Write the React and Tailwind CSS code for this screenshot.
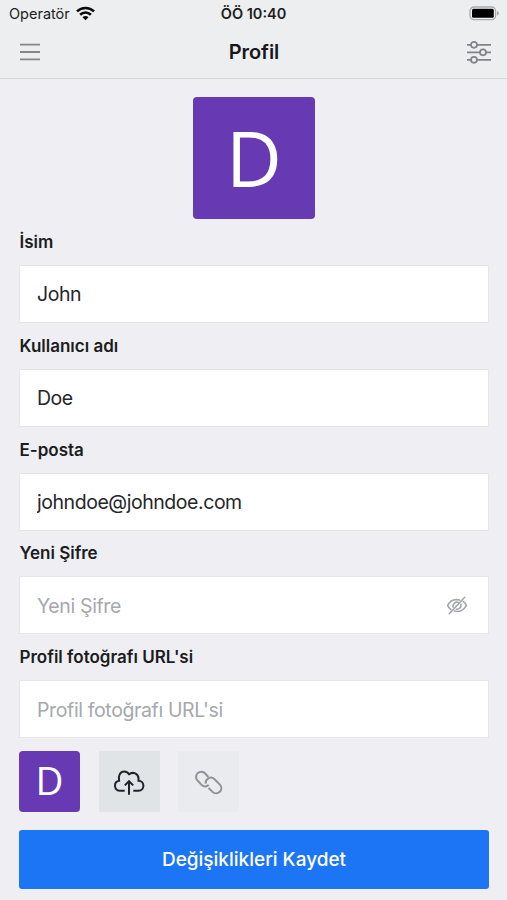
import React, { useState } from 'react';

const FIELDS = [
  { id: 'name', label: 'İsim' },
  { id: 'username', label: 'Kullanıcı adı' },
  { id: 'email', label: 'E-posta' },
  { id: 'password', label: 'Yeni Şifre', placeholder: 'Yeni Şifre', secret: true },
  { id: 'photo', label: "Profil fotoğrafı URL'si", placeholder: "Profil fotoğrafı URL'si" },
];

function WifiIcon() {
  return (
    <svg width="19" height="15" viewBox="0 0 19 15" fill="none" stroke="#0b0b0d" strokeWidth="2.6">
      <path d="M1 5.4a12.2 12.2 0 0 1 17 0" />
      <path d="M4.1 8.7a7.7 7.7 0 0 1 10.8 0" />
      <path d="M9.5 14.3 6.5 11.2a4.2 4.2 0 0 1 6 0z" fill="#0b0b0d" stroke="none" />
    </svg>
  );
}

function BatteryIcon() {
  return (
    <svg width="32" height="15" viewBox="0 0 32 15">
      <rect x="2" y="1" width="25.6" height="12.6" rx="4" fill="#f4f4f5" stroke="#a9aaac" strokeWidth="1.3" />
      <rect x="4" y="2.8" width="21.8" height="9" rx="1.5" fill="#000" />
      <path d="M29 5c2.600 1 2.600 3.600 0 4.600z" fill="#a9aaac" />
    </svg>
  );
}

function MenuIcon() {
  return (
    <svg width="20" height="18" viewBox="0 0 20 18" stroke="#85868b" strokeWidth="1.8">
      <path d="M0 1.6h20M0 9h20M0 16.4h20" />
    </svg>
  );
}

function SlidersIcon() {
  return (
    <svg width="24" height="24" viewBox="0 0 24 24" fill="none" stroke="#808388" strokeWidth="1.7">
      <path d="M0 4.8h4M10 4.8h14M0 12.3h13M19 12.3h5M0 19.8h4M10 19.8h14" />
      <circle cx="7" cy="4.8" r="3" />
      <circle cx="16" cy="12.3" r="3" />
      <circle cx="7" cy="19.8" r="3" />
    </svg>
  );
}

function EyeOffIcon() {
  return (
    <svg width="22" height="20" viewBox="0 0 22 20" fill="none" stroke="#a3a6ab" strokeWidth="1.6" strokeLinecap="round">
      <path d="M13.7 4.1C8.500 2.700 4 5 1.700 9.400c.7 1.800 1.800 3.200 3.200 4.300" />
      <path d="M17.2 5.5c1.400 1 2.500 2.300 3.200 3.900-2.300 4.700-7 6.900-12 5.600" />
      <path d="M12 6.3a4 4 0 0 0-4.900 4.700M10.300 13.200a4 4 0 0 0 4.600-4.800" />
      <path d="M18.7 1.3 3.300 17.700" />
    </svg>
  );
}

function CloudUploadIcon() {
  return (
    <svg width="34" height="30" viewBox="0 0 34 30" fill="none" stroke="#202428" strokeWidth="2">
      <path d="M12.7 22.7H7.600a5 5 0 0 1-.5-9.900C5.800 7.500 8.400 3.600 12.200 3.600c2.300 0 4.100 1.200 5.400 3.400" />
      <path d="M16.8 6.4c4.200-3.300 9.700-.7 9.700 4.200v2.100c2.900.1 4.900 2.300 4.900 5s-2.100 5-4.900 5H21.300" />
      <path d="M17 26.800V13.600M12.800 17.400l4.200-4.200 4.200 4.200" />
    </svg>
  );
}

function LinkIcon() {
  return (
    <svg width="31" height="28" viewBox="0 0 31 28" fill="none" stroke="#8f9296" strokeWidth="2">
      <path d="M15.3 8 12.200 4.500A5.200 5.200 0 0 0 4.400 11.400l3.900 4.300a5.200 5.200 0 0 0 7.400.3" />
      <path d="M12.7 14.600a5.200 5.200 0 0 1 8.600-4.600l5.600 5.600a5.200 5.200 0 0 1-7.400 7.300L15.600 19" />
    </svg>
  );
}

function Field({ field, value, onChange }) {
  return (
    <div className="mb-[12.8px]">
      <label htmlFor={field.id} className="block h-[33px] pl-[0.5px] text-[17px] leading-[21px] font-semibold text-[#1b1c20]">
        {field.label}
      </label>
      <div className="flex h-[58px] items-center border border-[#e6e6e9] bg-white pt-0.5 pr-5 pl-[17px]">
        <input
          id={field.id}
          type={field.secret ? 'password' : 'text'}
          value={value}
          placeholder={field.placeholder}
          onChange={(e) => onChange(field.id, e.target.value)}
          className="min-w-0 flex-1 bg-transparent text-[19.5px] tracking-[-0.45px] text-[#25262a] outline-none placeholder:tracking-[-0.37px] placeholder:text-[#a5a8ad]"
        />
        {field.secret && <EyeOffIcon />}
      </div>
    </div>
  );
}

export default function App() {
  const [form, setForm] = useState({
    name: 'John',
    username: 'Doe',
    email: 'johndoe@johndoe.com',
    password: '',
    photo: '',
  });

  const update = (id, value) => setForm((prev) => ({ ...prev, [id]: value }));

  return (
    <div className="flex h-[900px] w-[507px] flex-col overflow-hidden bg-[#efeef3] font-['Inter','Liberation_Sans',sans-serif]">
      <header className="h-[79px] shrink-0 border-b border-[#d9dadd] bg-[#edeef0]">
        {/* Status bar */}
        <div className="grid h-[27px] grid-cols-3 items-center px-[7px] text-[14.5px] text-[#1c1d20]">
          <div className="flex items-center gap-[6px] pl-0.5">
            <span>Operatör</span>
            <WifiIcon />
          </div>
          <span className="text-center font-semibold">ÖÖ 10:40</span>
          <div className="flex justify-end">
            <BatteryIcon />
          </div>
        </div>
        {/* Navigation */}
        <div className="grid h-[50px] grid-cols-3 items-center px-4">
          <button type="button" aria-label="Menü" className="pl-[3.5px]">
            <MenuIcon />
          </button>
          <h1 className="pl-px text-center text-xl font-semibold tracking-[-0.1px] text-[#17181b]">Profil</h1>
          <button type="button" aria-label="Ayarlar" className="flex justify-end">
            <SlidersIcon />
          </button>
        </div>
      </header>

      <main className="pt-[18px] pr-[18px] pl-[19px]">
        <div className="mx-auto mb-[13px] flex size-[122px] items-center justify-center rounded bg-[#673ab4] pb-0.5 font-['Open_Sans'] text-[77px] leading-none text-white">
          D
        </div>

        {FIELDS.map((field) => (
          <Field key={field.id} field={field} value={form[field.id]} onChange={update} />
        ))}

        <div className="mb-[18px] flex gap-[18.5px]">
          <div className="flex size-[61px] items-center justify-center rounded bg-[#673ab4] pb-[3px] font-['Open_Sans'] text-[38.5px] leading-none text-white">
            D
          </div>
          <button type="button" aria-label="Yükle" className="flex size-[61px] items-center justify-center bg-[#e0e4e7] pt-[3px]">
            <CloudUploadIcon />
          </button>
          <button type="button" aria-label="Bağlantı" className="flex size-[61px] items-center justify-center bg-[#e9ebee] pt-[3px]">
            <LinkIcon />
          </button>
        </div>

        <button type="button" className="h-[59px] w-full rounded-[3px] bg-[#1c75f5] pt-px text-[19px] font-medium text-white">
          Değişiklikleri Kaydet
        </button>
      </main>
    </div>
  );
}
